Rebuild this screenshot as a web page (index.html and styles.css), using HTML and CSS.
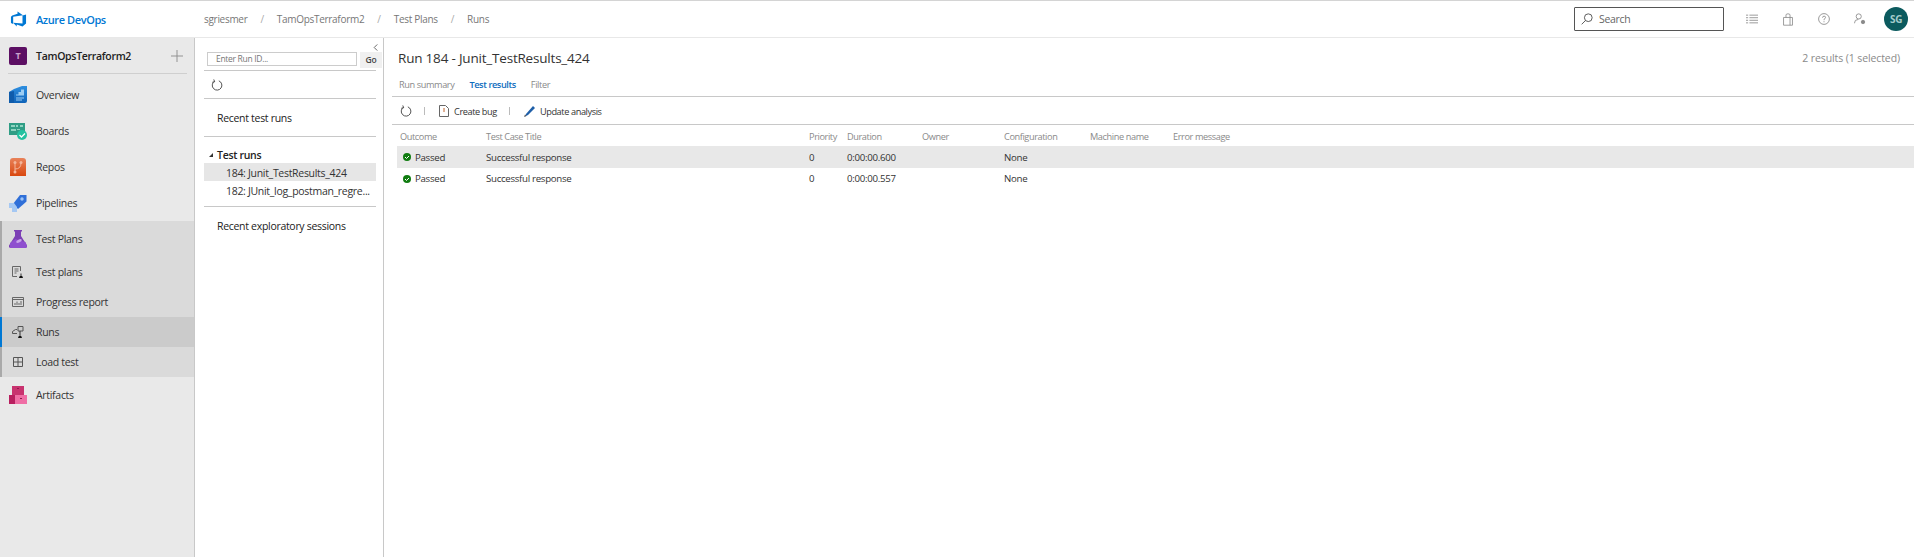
FILE: index.html
```html
<!DOCTYPE html>
<html lang="en">
<head>
    <title>Runs - Azure DevOps</title>
    <meta name="viewport" content="width=device-width, initial-scale=1.0" />
    <link rel="stylesheet" href="styles.css">
</head>

<body>
    <header class="topbar">
        <div class="brand">
            <svg class="logo" width="17" height="16" viewBox="0 0 18 18">
                <path d="M17.500 4v10l-4 3.500-6.500-2.300v2.300L3 13.200l10.500.8V5.200zM14 4.700 7.900.6v2.500L2 5 .5 6.500v7.100l2.500 1V6.400z" fill="#0078d4"/>
            </svg>
            <span>Azure DevOps</span>
        </div>
        <nav class="crumbs">
            <span>sgriesmer</span><i>/</i>
            <span>TamOpsTerraform2</span><i>/</i>
            <span>Test Plans</span><i>/</i>
            <span>Runs</span>
        </nav>
        <div class="search">
            <svg width="12" height="12" viewBox="0 0 14 14" fill="none" stroke="#444">
                <circle cx="8.500" cy="5.500" r="4.500"/><path d="M5.200 8.800 .8 13.200"/>
            </svg>
            <span>Search</span>
        </div>
        <div class="top-icons">
            <svg width="12" height="12" viewBox="0 0 14 14" fill="none" stroke="#8a8a8a">
                <path d="M4 2.500h10M4 5.500h10M4 8.500h10M4 11.500h10M0 2.500h2.500M0 5.500h2.500M0 8.500h2.500M0 11.500h2.500"/>
            </svg>
            <svg width="12" height="13" viewBox="0 0 14 16" fill="none" stroke="#8a8a8a">
                <path d="M1.500 5.500h11v9.500h-11zM4.500 5.500V2.500q0-1.500 2.500-1.500t2.500 1.500v3M9.500 5.500v9.500"/>
            </svg>
            <svg width="12" height="12" viewBox="0 0 14 14" fill="none" stroke="#8a8a8a">
                <circle cx="7" cy="7" r="6.300"/><path d="M5.300 5.500q0-1.800 1.800-1.800t1.700 1.600q0 1-1.800 2.100v1"/><path d="M7 9.600v1.200"/>
            </svg>
            <svg width="12" height="12" viewBox="0 0 14 14" fill="none" stroke="#8a8a8a">
                <circle cx="5.500" cy="4" r="3"/><path d="M.5 12q0-4.500 4.500-4.500"/><circle cx="10.500" cy="10.500" r="2" fill="#8a8a8a"/>
            </svg>
        </div>
        <div class="avatar">SG</div>
    </header>

    <div class="main">
        <aside class="sidebar">
            <div class="project">
                <div class="project-badge">T</div>
                <span class="project-name">TamOpsTerraform2</span>
                <svg class="project-add" width="12" height="12" viewBox="0 0 13 13" stroke="#8c8c8c"><path d="M6.500 0v13M0 6.500h13"/></svg>
            </div>

            <ul class="nav">
                <li class="nav-item">
                    <svg class="hub" width="18" height="18" viewBox="0 0 18 18">
                        <defs>
                            <linearGradient id="overviewFill" x1="0" y1="0" x2="0" y2="1">
                                <stop offset="0" stop-color="#2f8fe0"/>
                                <stop offset="1" stop-color="#0f63b8"/>
                            </linearGradient>
                        </defs>
                        <path d="M5 3l8-3h5v15q0 2-2 2H0V6z" fill="url(#overviewFill)"/>
                        <path d="M0 6l5-1v12H0z" fill="#0f5cab"/>
                        <path d="M7 8.500h2.500V6H12V3.500h3v6H7zM7 11.500h8v1H7zM7 13.500h6v1H7z" fill="#9ccdf3"/>
                    </svg>
                    Overview
                </li>
                <li class="nav-item">
                    <svg class="hub" width="18" height="18" viewBox="0 0 18 18">
                        <path d="M0 1h16v12H0z" fill="#2f9d85"/>
                        <path d="M2 3h4v2H2zM7 3h2v2H7zM11 3h3v2h-3zM2 7h5v2H2zM8 7h3v1H8z" fill="#8fd3c0"/>
                        <circle cx="13" cy="13" r="5" fill="#24c2a0"/>
                        <path d="m10.500 13 2 2 3.500-3.500" fill="none" stroke="#fff" stroke-width="1.300"/>
                    </svg>
                    Boards
                </li>
                <li class="nav-item">
                    <svg class="hub" width="18" height="18" viewBox="0 0 18 18">
                        <defs>
                            <linearGradient id="reposFill" x1="0" y1="0" x2="0" y2="1">
                                <stop offset="0" stop-color="#e8825a"/>
                                <stop offset="1" stop-color="#d9480f"/>
                            </linearGradient>
                        </defs>
                        <path d="M4 0h10q3 0 3 3v15H1V3q0-3 3-3z" fill="url(#reposFill)"/>
                        <path d="M6 5v9M6 11q6 0 6-6" fill="none" stroke="#f4b59a"/>
                        <circle cx="6" cy="4.500" r="1.500" fill="#f4b59a"/><circle cx="12" cy="4.500" r="1.500" fill="#f4b59a"/><circle cx="6" cy="14" r="1.500" fill="#f4b59a"/>
                    </svg>
                    Repos
                </li>
                <li class="nav-item">
                    <svg class="hub" width="18" height="18" viewBox="0 0 18 18">
                        <path d="M11 1h6.500v6.500L9 15l-5-5z" fill="#2f6fd8"/>
                        <circle cx="13" cy="5" r="1.700" fill="#9cc3f5"/>
                        <path d="M0 9h5l3 4v5H3v-4H0z" fill="#a5c8f3"/>
                    </svg>
                    Pipelines
                </li>
                <li class="nav-group">
                    <div class="nav-item group-head">
                        <svg class="hub" width="18" height="18" viewBox="0 0 18 18">
                            <path d="M5 0h8v1.500h-1V6l6 9.500q.5 2.500-2 2.500H2q-2.500 0-2-2.500L6 6V1.500H5z" fill="#7b3fb5"/>
                            <path d="M1 13 6.500 9q4 2 10 3l1.500 4-1 2H1z" fill="#8f4fcf"/>
                            <ellipse cx="10" cy="11" rx="3" ry="1.500" fill="#c9a4ea" transform="rotate(-25 10 11)"/>
                        </svg>
                        Test Plans
                    </div>
                    <div class="sub-item">
                        <svg width="12" height="12" viewBox="0 0 12 12" fill="none" stroke="#666">
                            <path d="M8.500 5V.5H.5v10h4.500M2.500 3h4M2.500 5h4M2.500 7h2"/>
                            <path d="M7 12l.8-2h2.400l.8 2z" fill="#111" stroke="none"/><path d="M9 7.500V10" stroke="#333"/>
                        </svg>
                        Test plans
                    </div>
                    <div class="sub-item">
                        <svg width="12" height="10" viewBox="0 0 12 10" fill="none" stroke="#666">
                            <path d="M.5.500h11v9H.5zM.5 2.500h11M3 8V6M5 8V4.500M7 8V6M9 8V4"/>
                        </svg>
                        Progress report
                    </div>
                    <div class="sub-item selected">
                        <svg width="12" height="12" viewBox="0 0 12 12" fill="none" stroke="#555">
                            <path d="M5 7.500H.5V5.500l3-2H5M6 .5h5v4.500H6z"/>
                            <path d="M6 12l.8-2h2.400l.8 2z" fill="#111" stroke="none"/><path d="M8 5v5" stroke="#333"/>
                        </svg>
                        Runs
                    </div>
                    <div class="sub-item">
                        <svg width="12" height="10" viewBox="0 0 12 10" fill="none" stroke="#555">
                            <path d="M1.500.5h9v9h-9zM6 .5v9M1.500 5h9"/>
                        </svg>
                        Load test
                    </div>
                </li>
                <li class="nav-item">
                    <svg class="hub" width="18" height="18" viewBox="0 0 18 18">
                        <path d="M3 0h12v9H3z" fill="#c8336f"/>
                        <path d="M0 9h7v9H0z" fill="#b81f5f"/>
                        <path d="M6 9h12v9H6z" fill="#ef6ea5"/>
                        <path d="M8 2h2v1H8zM11 12h2v1h-2z" fill="#8e1a4c"/>
                    </svg>
                    Artifacts
                </li>
            </ul>
        </aside>

        <section class="runs-panel">
            <div class="collapse">
                <svg width="5" height="7" viewBox="0 0 5 8" fill="none" stroke="#555"><path d="M4.500.5 1 4l3.500 3.500"/></svg>
            </div>
            <div class="run-search">
                <div class="run-input">Enter Run ID...</div>
                <div class="go-btn">Go</div>
            </div>
            <div class="panel-tools">
                <svg width="12" height="12" viewBox="0 0 12 13" fill="none" stroke="#444"><path d="M3.200 2.500A5.200 5.200 0 1 0 8 2M2.500 .5l1 2.500-2.500 .5"/></svg>
            </div>
            <div class="panel-section">Recent test runs</div>
            <div class="tree">
                <div class="tree-head"><span class="tree-arrow"></span>Test runs</div>
                <div class="tree-row active">184: Junit_TestResults_424</div>
                <div class="tree-row">182: JUnit_log_postman_regre...</div>
            </div>
            <div class="panel-section">Recent exploratory sessions</div>
        </section>

        <section class="content">
            <div class="title-row">
                <h1>Run 184 - Junit_TestResults_424</h1>
                <span class="count">2 results (1 selected)</span>
            </div>
            <div class="tabs">
                <span>Run summary</span>
                <span class="tab-on">Test results</span>
                <span>Filter</span>
            </div>
            <div class="toolbar">
                <svg width="12" height="12" viewBox="0 0 12 13" fill="none" stroke="#444"><path d="M3.200 2.500A5.200 5.200 0 1 0 8 2M2.500 .5l1 2.500-2.500 .5"/></svg>
                <i class="sep"></i>
                <div class="tool">
                    <svg width="10" height="12" viewBox="0 0 10 12" fill="none" stroke="#666"><path d="M.5.500h6l3 3v8h-9z"/><path d="M5 3v4" stroke="#c4622d"/></svg>
                    Create bug
                </div>
                <i class="sep"></i>
                <div class="tool">
                    <svg width="11" height="11" viewBox="0 0 11 11"><path d="M9 0l2 2-7 7-3 1.500L2 8z" fill="#1f5fa8"/><path d="M0 11l1-2.500 1.500 1.500z" fill="#555"/></svg>
                    Update analysis
                </div>
            </div>

            <div class="grid-row grid-head">
                <span>Outcome</span>
                <span>Test Case Title</span>
                <span>Priority</span>
                <span>Duration</span>
                <span>Owner</span>
                <span>Configuration</span>
                <span>Machine name</span>
                <span>Error message</span>
            </div>
            <div class="grid-row data-row picked">
                <span class="outcome">
                    <svg width="8" height="8" viewBox="0 0 8 8"><circle cx="4" cy="4" r="4" fill="#107c10"/><path d="m2 4 1.500 1.500L6 3" fill="none" stroke="#fff"/></svg>
                    Passed
                </span>
                <span>Successful response</span>
                <span>0</span>
                <span>0:00:00.600</span>
                <span></span>
                <span>None</span>
                <span></span>
                <span></span>
            </div>
            <div class="grid-row data-row">
                <span class="outcome">
                    <svg width="8" height="8" viewBox="0 0 8 8"><circle cx="4" cy="4" r="4" fill="#107c10"/><path d="m2 4 1.500 1.500L6 3" fill="none" stroke="#fff"/></svg>
                    Passed
                </span>
                <span>Successful response</span>
                <span>0</span>
                <span>0:00:00.557</span>
                <span></span>
                <span>None</span>
                <span></span>
                <span></span>
            </div>
        </section>
    </div>
</body>

</html>
```

FILE: styles.css
```css
* {
    box-sizing: border-box;
}

body {
    display: flex;
    flex-direction: column;
    height: 100vh;
    margin: 0;
    overflow: hidden;

    background: white;
    color: #222;
    font-family: "Open Sans", sans-serif;
    font-size: 10px;
    letter-spacing: -0.3px;
}

/* top bar */
.topbar {
    display: flex;
    align-items: center;
    height: 38px;
    flex: none;
    background: white;
    border-top: 1px solid #d4d4d4;
    border-bottom: 1px solid #e8e8e8;
}

.brand {
    display: flex;
    align-items: center;
    gap: 9px;
    width: 204px;
    padding-left: 10px;
    color: #0078d4;
    font-size: 11px;
    font-weight: 600;
    letter-spacing: -0.4px;
}

.crumbs {
    display: flex;
    align-items: center;
    color: #777;
    font-size: 10px;
}

.crumbs i {
    font-style: normal;
    color: #aaa;
    padding: 0 13px;
}

.search {
    display: flex;
    align-items: center;
    gap: 6px;
    width: 150px;
    height: 24px;
    margin-left: auto;
    margin-right: 22px;
    padding-left: 6px;
    border: 1px solid #555;
    border-radius: 1px;
    color: #666;
    font-size: 10.5px;
}

.top-icons {
    display: flex;
    align-items: center;
    gap: 24px;
}

.avatar {
    display: flex;
    align-items: center;
    justify-content: center;
    width: 24px;
    height: 24px;
    margin-left: 18px;
    margin-right: 6px;
    border-radius: 50%;
    background: #0b5a5e;
    color: #a3cccc;
    font-size: 10px;
    font-weight: 700;
}

.main {
    display: flex;
    flex: 1;
    min-height: 0;
}

/* left nav */
.sidebar {
    width: 195px;
    flex: none;
    background: #e9e9e9;
    border-right: 1px solid #c8c8c8;
}

.project {
    display: flex;
    align-items: center;
    gap: 9px;
    height: 36px;
    margin: 0 7px 0 8px;
    padding-left: 1px;
    border-bottom: 1px solid #cfcfcf;
}

.project-badge {
    display: flex;
    align-items: center;
    justify-content: center;
    width: 18px;
    height: 18px;
    border-radius: 2px;
    background: #5c0f63;
    color: #c9a4cc;
    font-size: 9px;
    font-weight: 700;
}

.project-name {
    flex: 1;
    color: #222;
    font-size: 10.5px;
    font-weight: 600;
}

.project-add {
    margin-right: 4px;
}

.nav {
    list-style: none;
    margin: 3px 0 0;
    padding: 0;
}

.nav-item {
    display: flex;
    align-items: center;
    gap: 9px;
    height: 36px;
    padding-left: 9px;
    color: #333;
    font-size: 10.5px;
}

.nav-group {
    background: #dadada;
    border-left: 2px solid #a9a9a9;
}

.group-head {
    padding-left: 7px;
}

.sub-item {
    display: flex;
    align-items: center;
    gap: 12px;
    height: 30px;
    margin-left: -2px;
    padding-left: 10px;
    border-left: 2px solid #a9a9a9;
    color: #333;
    font-size: 10.5px;
}

.sub-item.selected {
    background: #cbcbcb;
    border-left-color: #0078d4;
}

/* test runs panel */
.runs-panel {
    position: relative;
    width: 189px;
    flex: none;
    padding: 0 7px 0 9px;
    border-right: 1px solid #c8c8c8;
}

.collapse {
    position: absolute;
    top: 6px;
    right: 5px;
    line-height: 0;
}

.run-search {
    display: flex;
    gap: 3px;
    height: 32px;
    margin-left: 3px;
    margin-right: -6px;
    padding-top: 14px;
}

.run-input {
    width: 150px;
    height: 14px;
    padding-left: 8px;
    border: 1px solid #ccc;
    color: #777;
    font-size: 8.5px;
    line-height: 12px;
}

.go-btn {
    width: 22px;
    height: 16px;
    background: #f0f0f0;
    color: #444;
    font-size: 8.5px;
    font-weight: 600;
    text-align: center;
    line-height: 16px;
}

.panel-tools {
    display: flex;
    align-items: center;
    height: 29px;
    padding-left: 7px;
    border-top: 1px solid #c8c8c8;
    border-bottom: 1px solid #c8c8c8;
}

.panel-section {
    display: flex;
    align-items: center;
    height: 37px;
    padding-left: 13px;
    color: #222;
    font-size: 10.5px;
}

.tree {
    height: 71px;
    padding-top: 10px;
    border-top: 1px solid #c8c8c8;
    border-bottom: 1px solid #c8c8c8;
}

.tree-head {
    display: flex;
    align-items: center;
    height: 16px;
    color: #222;
    font-size: 10.5px;
    font-weight: 600;
}

.tree-arrow {
    width: 0;
    height: 0;
    margin: 0 4px 0 5px;
    border-left: 4px solid transparent;
    border-bottom: 4px solid #333;
}

.tree-row {
    height: 18px;
    padding-left: 22px;
    color: #333;
    font-size: 10.5px;
    line-height: 20px;
    white-space: nowrap;
}

.tree-row.active {
    background: #e6e6e6;
}

/* run details */
.content {
    flex: 1;
    min-width: 0;
    padding-left: 8px;
}

.title-row {
    display: flex;
    align-items: center;
    justify-content: space-between;
    height: 36px;
    padding: 4px 14px 0 6px;
}

h1 {
    margin: 0;
    color: #333;
    font-size: 13.5px;
    font-weight: 400;
    letter-spacing: -0.2px;
}

.count {
    color: #8a8a8a;
    font-size: 10.5px;
    letter-spacing: -0.1px;
}

.tabs {
    display: flex;
    gap: 15px;
    align-items: center;
    height: 22px;
    padding: 0 0 2px 7px;
    color: #8a8a8a;
    font-size: 9.2px;
    letter-spacing: -0.4px;
}

.tab-on {
    color: #106ebe;
    font-weight: 600;
}

.toolbar {
    display: flex;
    align-items: center;
    height: 29px;
    padding: 1px 0 0 8px;
    border-top: 1px solid #c8c8c8;
    border-bottom: 1px solid #c8c8c8;
}

.toolbar .sep {
    width: 1px;
    height: 8px;
    margin: 0 14px 0 12px;
    background: #bbb;
}

.tool {
    display: flex;
    align-items: center;
    gap: 5px;
    color: #333;
    font-size: 9.2px;
    letter-spacing: -0.4px;
}

.grid-row {
    display: grid;
    grid-template-columns: 89px 323px 38px 75px 82px 86px 83px 1fr;
    align-items: center;
    margin-left: 5px;
}

.grid-head {
    height: 21px;
    padding-top: 1px;
    color: #8a8a8a;
    font-size: 9.2px;
    letter-spacing: -0.4px;
}

.grid-head span:first-child {
    padding-left: 3px;
}

.data-row {
    height: 21px;
    color: #333;
    font-size: 9.7px;
}

.data-row.picked {
    height: 22px;
    background: #e8e8e8;
}

.outcome {
    display: flex;
    align-items: center;
    gap: 4px;
    padding-left: 6px;
}
```
